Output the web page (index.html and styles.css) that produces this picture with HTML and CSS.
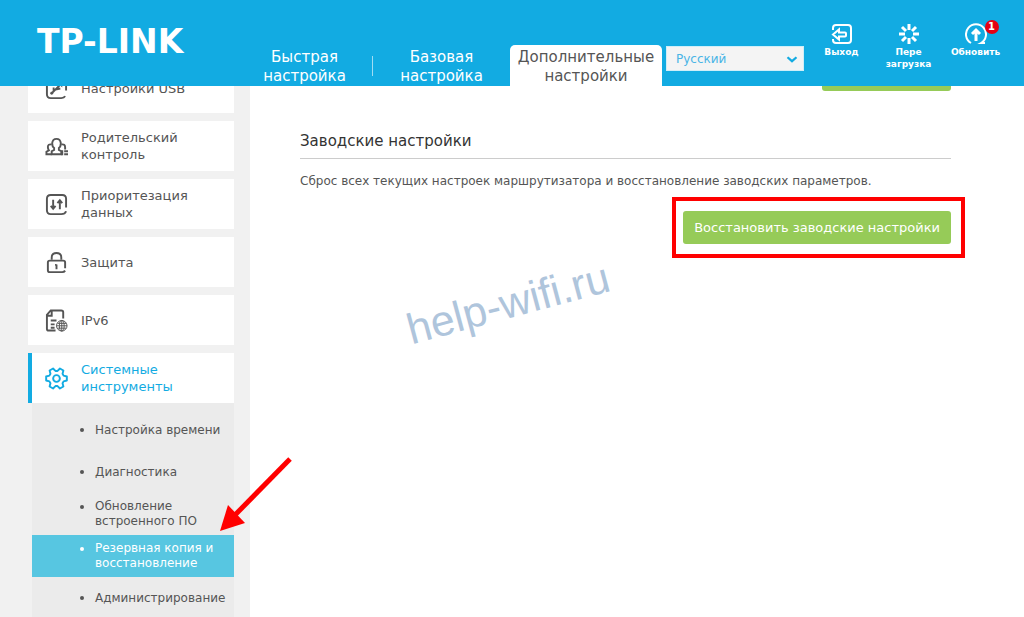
FILE: index.html
```html
<!DOCTYPE html>
<html lang="ru">
<head>
<meta charset="utf-8">
<meta name="viewport" content="width=device-width, initial-scale=1">
<title>TP-LINK – Резервная копия и восстановление</title>
<link rel="stylesheet" href="styles.css">
</head>
<body>
<header class="header">
  <a class="logo" href="#">TP-LINK</a>
  <nav class="tabs">
    <a class="tab tab-divided" href="#">Быстрая<br>настройка</a>
    <a class="tab" href="#">Базовая<br>настройка</a>
    <a class="tab tab-active" href="#">Дополнительные<br>настройки</a>
  </nav>
  <div class="language">
    <select class="language-select" aria-label="Язык"><option>Русский</option></select>
    <svg class="language-arrow" viewBox="0 0 12 8" aria-hidden="true"><path d="M2 2l4 3.500 4-3.500"/></svg>
  </div>
  <div class="actions">
    <button class="action" type="button">
      <svg class="action-icon" viewBox="0 0 22 22"><path d="M2 7V5q0-3 3-3h12q3 0 3 3v12q0 3-3 3H5q-3 0-3-3v-1"/><path d="M2 11.500l6-5v3h6q1 0 1 1v2q0 1-1 1H8v3z"/></svg>
      <span>Выход</span>
    </button>
    <button class="action" type="button">
      <svg class="action-icon action-icon-bold" viewBox="0 0 22 22"><path d="M11 1v6M11 15v6M1 11h6M15 11h6M4 4l4 4M14 14l4 4M18 4l-4 4M8 14l-4 4"/></svg>
      <span>Пере<br>загрузка</span>
    </button>
    <button class="action" type="button">
      <span class="action-figure">
        <svg class="action-icon" viewBox="0 0 22 22"><path d="M6 20A10 10 0 1 1 16 20H20"/><path class="stroke-bold" d="M11 18V7M7 11l4-4 4 4"/></svg>
        <span class="badge">1</span>
      </span>
      <span>Обновить</span>
    </button>
  </div>
</header>

<div class="page">
  <aside class="sidebar">
    <ul class="menu">
      <li><a class="menu-item" href="#">
        <svg class="menu-icon" viewBox="0 0 24 24"><path d="M22 14v-9q0-3-3-3H5q-3 0-3 3v13q0 4 4 4h11q3 0 4-2"/><path d="M7 17l9-9M9 15v-4M11 13l5-1"/><circle class="filled" cx="7" cy="17" r="1.500"/><path class="filled" d="M14 7h4v4z"/></svg>
        <span>Настройки USB</span></a></li>
      <li><a class="menu-item" href="#">
        <svg class="menu-icon" viewBox="0 0 24 24"><path d="M9.500 13.500Q7.500 12 7.500 8.500 8 4 12 4t4.500 4.500q0 3.500-2 5v2l2.500 1.500v3H7v-3l2.500-1.500z"/><path d="M7 10q-4-1-4 2.500 0 2 1 3.500l-2.500 1.500V20H7M17 10q4-1 4 3v2M17 20h1v-4M20 17h4M20 20h4"/></svg>
        <span>Родительский<br>контроль</span></a></li>
      <li><a class="menu-item" href="#">
        <svg class="menu-icon" viewBox="0 0 24 24"><path d="M22 15V6q0-4-4-4H6Q2 2 2 6v12q0 4 4 4h11q4 0 5-3"/><path d="M8.500 7v9M6 13.500l2.500 3 2.500-3M15.500 17V8M13 10.500l2.500-3 2.500 3"/></svg>
        <span>Приоритезация<br>данных</span></a></li>
      <li><a class="menu-item" href="#">
        <svg class="menu-icon" viewBox="0 0 24 24"><path d="M21 18v-6q0-2-2-2H5q-2 0-2 2v8q0 2 2 2h13q2 0 3-1.500"/><path d="M7 9V7q0-5 5-5t5 5v2M12 14v5M10.500 14.500H12"/></svg>
        <span>Защита</span></a></li>
      <li><a class="menu-item" href="#">
        <svg class="menu-icon" viewBox="0 0 24 24"><path d="M11 22.500H4q-2 0-2-2V6l4-4.500h11q2 0 2 2V10M3 7h4V2M6 12h6M6 16h4M6 19.500h4"/><g class="stroke-thin"><circle cx="17.500" cy="17.500" r="5.500"/><path d="M17.500 12v11M12 17.500h11M13 15h9M13 20h9"/><ellipse cx="17.500" cy="17.500" rx="2.500" ry="5.500"/></g></svg>
        <span>IPv6</span></a></li>
      <li><a class="menu-item menu-item-active" href="#">
        <svg class="menu-icon" viewBox="0 0 24 24"><path stroke-linejoin="round" d="M22.800 14.100L19.400 15l-1.100 1.900.9 3.400-3.600 2.100-2.500-2.500h-2.200l-2.500 2.500-3.600-2.100.9-3.400L4.600 15l-3.400-.9V9.900L4.600 9l1.100-1.900-.9-3.400 3.600-2.100 2.500 2.500h2.200l2.500-2.500 3.600 2.100-.9 3.400L19.400 9l3.400.9z"/><circle cx="12" cy="12" r="3.500"/></svg>
        <span>Системные<br>инструменты</span></a>
        <ul class="submenu">
          <li><a class="submenu-item" href="#">Настройка времени</a></li>
          <li><a class="submenu-item" href="#">Диагностика</a></li>
          <li><a class="submenu-item submenu-item-tall" href="#"><span>Обновление<br>встроенного ПО</span></a></li>
          <li><a class="submenu-item submenu-item-tall submenu-item-active" href="#"><span>Резервная копия и<br>восстановление</span></a></li>
          <li><a class="submenu-item" href="#">Администрирование</a></li>
        </ul>
      </li>
    </ul>
    <svg class="pointer" viewBox="0 0 72 76" aria-hidden="true"><path class="pointer-line" d="M70 2L15 58"/><path class="pointer-head" d="M0 74L8 48l17 18z"/></svg>
  </aside>

  <main class="content">
    <div class="button-row"><button class="button button-short" type="button" aria-label="Восстановить"></button></div>
    <h2 class="heading">Заводские настройки</h2>
    <p class="description">Сброс всех текущих настроек маршрутизатора и восстановление заводских параметров.</p>
    <div class="button-row"><span class="highlight"><button class="button" type="button">Восстановить заводские настройки</button></span></div>
    <span class="watermark">help-wifi.ru</span>
  </main>
</div>
</body>
</html>
```
FILE: styles.css
```css
* {
  box-sizing: border-box;
}

body {
  margin: 0;
  height: 100vh;
  overflow: hidden;
  display: flex;
  flex-direction: column;
  background: #fff;
  color: #555;
  font-family: "DejaVu Sans", sans-serif;
  font-size: 13px;
}

a {
  color: inherit;
  text-decoration: none;
}

button,
select {
  font-family: inherit;
}

ul {
  list-style: none;
  margin: 0;
  padding: 0;
}

svg {
  display: block;
  fill: none;
  stroke: currentColor;
  stroke-width: 2;
}

.filled {
  fill: currentColor;
  stroke: none;
}

.stroke-bold {
  stroke-width: 3;
}

.stroke-thin {
  stroke-width: 1;
}

/* Header */
.header {
  position: relative;
  z-index: 1;
  display: flex;
  flex: none;
  height: 86px;
  padding: 0 15px 0 37px;
  background: #12abe2;
  color: #fff;
}

.logo {
  flex: 1;
  padding-top: 23px;
  font-size: 33px;
  line-height: 38px;
  font-weight: bold;
}

.tabs {
  display: flex;
  align-items: flex-end;
}

.tab {
  position: relative;
  width: 137px;
  padding-top: 3px;
  font-size: 15px;
  line-height: 19px;
  text-align: center;
}

.tab-divided::after {
  content: "";
  position: absolute;
  right: 0;
  top: 11px;
  width: 1px;
  height: 20px;
  background: #a0dcf3;
}

.tab-active {
  width: 152px;
  border-radius: 5px 5px 0 0;
  background: #fff;
  color: #555;
}

.language {
  position: relative;
  width: 138px;
  height: 25px;
  margin: 46px 4px 0;
}

.language-select {
  appearance: none;
  width: 100%;
  height: 100%;
  padding: 0 28px 0 9px;
  border: 1px solid #cfeef8;
  border-radius: 0;
  background: #f4f4f4;
  color: #4ab5e6;
  font-size: 12px;
}

.language-arrow {
  position: absolute;
  right: 5px;
  top: 9px;
  width: 14px;
  height: 9px;
  color: #12abe2;
  pointer-events: none;
}

.actions {
  display: flex;
  align-items: flex-start;
  padding-top: 23px;
}

.action {
  display: flex;
  flex-direction: column;
  align-items: center;
  gap: 1px;
  width: 67px;
  padding: 0;
  border: 0;
  background: none;
  color: #fff;
  font-size: 9px;
  font-weight: bold;
  line-height: 12px;
}

.action-icon {
  width: 22px;
  height: 22px;
}

.action-icon-bold {
  stroke-width: 3;
}

.action-figure {
  position: relative;
}

.badge {
  position: absolute;
  left: 20px;
  top: -3px;
  width: 14px;
  border-radius: 50%;
  background: #e60012;
  font-size: 10px;
  line-height: 14px;
  text-align: center;
}

/* Page */
.page {
  display: flex;
  flex: 1;
  margin-top: -28px;
}

.sidebar {
  position: relative;
  flex: none;
  width: 250px;
  padding: 5px 16px 0 28px;
  background: #f1f1f1;
}

.menu {
  display: flex;
  flex-direction: column;
  gap: 8px;
}

.menu-item {
  display: flex;
  align-items: center;
  gap: 13px;
  height: 50px;
  padding-left: 17px;
  background: #fff;
  line-height: 17px;
}

.menu-item-active {
  padding-left: 13px;
  border-left: 4px solid #12abe2;
  color: #12abe2;
}

.menu-icon {
  flex: none;
  width: 23px;
  height: 23px;
}

.submenu {
  margin-left: 4px;
  padding: 6px 0 20px;
  background: #ebebeb;
}

.submenu-item {
  display: flex;
  align-items: center;
  gap: 11px;
  height: 42px;
  padding-left: 48px;
  font-size: 12px;
  line-height: 15px;
}

.submenu-item::before {
  content: "";
  width: 4px;
  height: 4px;
  border-radius: 50%;
  background: currentColor;
}

.submenu-item-tall::before {
  margin-bottom: 15px;
}

.submenu-item-active {
  background: #57c6e1;
  color: #fff;
}

.pointer {
  position: absolute;
  left: 220px;
  top: 399px;
  width: 72px;
  height: 76px;
}

.pointer-line {
  stroke: #f00;
  stroke-width: 5;
}

.pointer-head {
  fill: #f00;
  stroke: none;
}

/* Content */
.content {
  position: relative;
  flex: 1;
  padding: 0 73px 0 50px;
}

.button-row {
  display: flex;
  justify-content: flex-end;
}

.button {
  height: 33px;
  padding: 0 11px;
  border: 0;
  border-radius: 3px;
  background: #96cb58;
  color: #fff;
  font-size: 13px;
}

.button-short {
  width: 129px;
}

.heading {
  margin: 0;
  padding: 40px 0 7px;
  border-bottom: 1px solid #ccc;
  color: #333;
  font-size: 15px;
  font-weight: normal;
  line-height: 20px;
}

.description {
  margin: 14px 0 8px;
  font-size: 12px;
  line-height: 16px;
}

.highlight {
  margin-right: -14px;
  padding: 10px 10px 10px 7px;
  border: 4px solid #f00;
}

.watermark {
  position: absolute;
  left: 154px;
  top: 220px;
  color: #afc5dc;
  font-family: "Liberation Sans", Arial, sans-serif;
  font-size: 43px;
  line-height: 50px;
  transform: rotate(-15deg);
}
```
